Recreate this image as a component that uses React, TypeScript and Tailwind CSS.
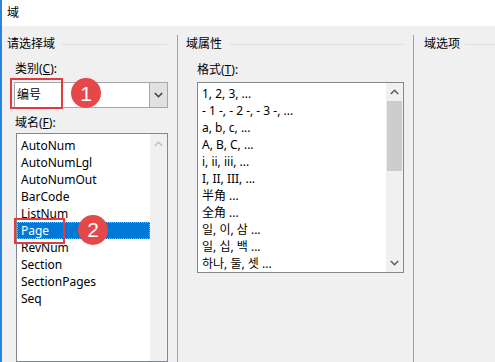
import React from "react";

const fieldNames = [
  "AutoNum",
  "AutoNumLgl",
  "AutoNumOut",
  "BarCode",
  "ListNum",
  "Page",
  "RevNum",
  "Section",
  "SectionPages",
  "Seq",
];

const formats = [
  "1, 2, 3, ...",
  "- 1 -, - 2 -, - 3 -, ...",
  "a, b, c, ...",
  "A, B, C, ...",
  "i, ii, iii, ...",
  "I, II, III, ...",
  "半角 ...",
  "全角 ...",
  "일, 이, 삼 ...",
  "일, 십, 백 ...",
  "하나, 둘, 셋 ...",
];

function Chevron({ up, color }: { up?: boolean; color: string }) {
  return (
    <svg width="9" height="6" viewBox="0 0 9 6">
      <polyline
        points={up ? "0.8,5 4.5,1.3 8.2,5" : "0.8,1 4.5,4.7 8.2,1"}
        fill="none"
        stroke={color}
        strokeWidth="1.6"
      />
    </svg>
  );
}

function GroupHeader({ title, className }: { title: string; className: string }) {
  return (
    <div className={"flex items-center h-4 mt-[10px] " + className}>
      <span className="leading-4 whitespace-nowrap">{title}</span>
      <div className="flex-1 h-px bg-[#dcdcdc]" />
    </div>
  );
}

function Badge({ n, className }: { n: number; className: string }) {
  return (
    <div
      className={
        "absolute w-[30px] h-[30px] rounded-full bg-[#e5474b] text-white flex items-center justify-center text-[21px] leading-none font-['Liberation_Sans',sans-serif] " +
        className
      }
    >
      {n}
    </div>
  );
}

export default function App() {
  return (
    <div className="w-[495px] h-[362px] overflow-hidden flex flex-col bg-[#f0f0f0] border-l-2 border-[#2b84d6] text-[12px] text-black font-['Noto_Sans','Noto_Sans_CJK_SC',sans-serif]">
      <div className="h-[26px] shrink-0 bg-white flex items-center pl-[5px]">域</div>
      <div className="flex flex-1 min-h-0">
        {/* left group */}
        <div className="w-[175px] shrink-0 flex flex-col">
          <GroupHeader title="请选择域" className="pl-[5px] pr-[10px] gap-[7px]" />
          <div className="mt-[9px] pl-[13px] h-4 leading-4">
            类别(<span className="underline">C</span>):
          </div>
          <div className="relative mt-[5px] ml-[12px] w-[154px] h-[27px] flex border border-[#a6a6a6] bg-white">
            <div className="flex-1 pl-[2px] flex items-center">编号</div>
            <div className="w-[18px] bg-[#e1e1e1] border-l border-[#a6a6a6] flex items-center justify-center">
              <Chevron color="#404040" />
            </div>
            <div className="absolute left-[-5px] top-[-5px] w-[53px] h-[31px] border-2 border-[#e23b3f]" />
            <Badge n={1} className="left-[56px] top-[-5px]" />
          </div>
          <div className="mt-[7px] pl-[13px] h-4 leading-4">
            域名(<span className="underline">F</span>):
          </div>
          <div className="relative mt-[2px] ml-[14px] w-[152px] h-[240px] flex border border-[#828790] bg-white">
            <div className="flex-1 pt-[3px]">
              {fieldNames.map((name) =>
                name === "Page" ? (
                  <div
                    key={name}
                    className="h-[17px] leading-[17px] pl-[4px] bg-[#0078d7] text-white outline-1 outline-dotted outline-[#f0a33a] -outline-offset-1"
                  >
                    {name}
                  </div>
                ) : (
                  <div key={name} className="h-[17px] leading-[17px] pl-[4px]">
                    {name}
                  </div>
                )
              )}
            </div>
            <div className="w-[17px] bg-[#f0f0f0]">
              <div className="h-[20px] flex items-center justify-center">
                <Chevron up color="#c2c2c2" />
              </div>
            </div>
            <div className="absolute left-[-3px] top-[84px] w-[51px] h-[26px] border-2 border-[#e23b3f]" />
            <Badge n={2} className="left-[61px] top-[81px]" />
          </div>
        </div>
        <div className="w-px mt-[9px] bg-[#a0a0a0]" />

        {/* middle group */}
        <div className="w-[235px] shrink-0 flex flex-col">
          <GroupHeader title="域属性" className="pl-[8px] pr-[10px] gap-[8px]" />
          <div className="mt-[10px] pl-[19px] h-4 leading-4">
            格式(<span className="underline">T</span>):
          </div>
          <div className="mt-[4px] ml-[19px] w-[207px] h-[191px] flex border border-[#828790] bg-white">
            <div className="flex-1 pt-[2px] overflow-hidden">
              {formats.map((f) => (
                <div
                  key={f}
                  className="h-[17px] leading-[17px] pl-[4px] whitespace-nowrap font-['Noto_Sans','Noto_Sans_CJK_SC','Noto_Sans_CJK_KR',sans-serif]"
                >
                  {f}
                </div>
              ))}
            </div>
            <div className="w-[17px] bg-[#f0f0f0] flex flex-col">
              <div className="h-[18px] flex items-center justify-center">
                <Chevron up color="#606060" />
              </div>
              <div className="h-[70px] mx-px bg-[#cdcdcd]" />
              <div className="flex-1" />
              <div className="h-[18px] flex items-center justify-center">
                <Chevron color="#606060" />
              </div>
            </div>
          </div>
        </div>
        <div className="w-px mt-[9px] bg-[#a0a0a0]" />

        {/* right group */}
        <div className="flex-1 flex flex-col">
          <GroupHeader title="域选项" className="pl-[10px] gap-[5px]" />
        </div>
      </div>
    </div>
  );
}
